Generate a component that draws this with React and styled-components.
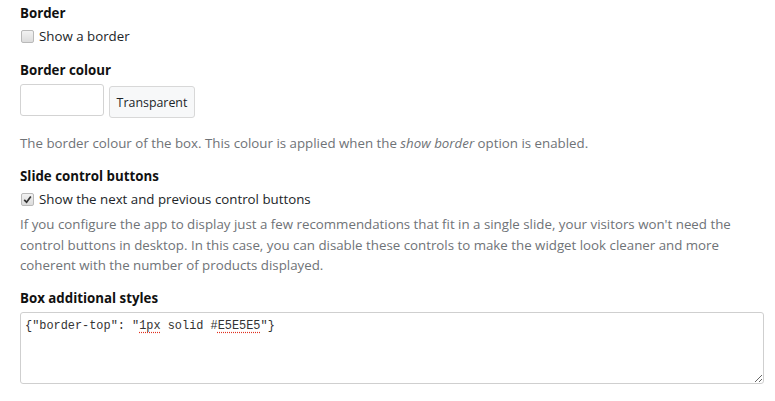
import React from "react";
import styled, { createGlobalStyle } from "styled-components";

const Global = createGlobalStyle`
  html, body { margin: 0; padding: 0; background: #fff; }
  body {
    font-family: "Open Sans", "Noto Sans", Arial, sans-serif;
    font-size: 13.3px;
    line-height: 20.4px;
    color: #212529;
  }
`;

const Page = styled.div`
  padding: 3px 12px 0 20px;
  display: flex;
  flex-direction: column;
`;

const Group = styled.section`
  display: flex;
  flex-direction: column;
  margin-bottom: ${(p) => p.$mb || 0}px;
`;

const Heading = styled.div`
  font-weight: 700;
  color: #111;
  margin-bottom: ${(p) => p.$mb || 3}px;
`;

const CheckRow = styled.label`
  display: flex;
  align-items: center;
  gap: 5px;
  color: #212529;
`;

const Box = styled.span`
  width: 11px;
  height: 11px;
  margin-left: 1px;
  border: 1px solid #b9b9b9;
  border-radius: 2px;
  background: linear-gradient(#f2f2f2, #dcdcdc);
  display: inline-flex;
  align-items: center;
  justify-content: center;
  flex-shrink: 0;
`;

const ColourRow = styled.div`
  display: flex;
  align-items: flex-start;
  gap: 5px;
`;

const Swatch = styled.div`
  width: 82px;
  height: 30px;
  border: 1px solid #d3d3d3;
  border-radius: 3px;
  background: #fff;
`;

const Button = styled.button`
  margin-top: 2px;
  height: 32px;
  width: 86px;
  border: 1px solid #d8d8d8;
  border-radius: 3px;
  background: #f7f8f9;
  font-family: inherit;
  font-size: 12.4px;
  color: #212529;
  padding: 0;
`;

const Help = styled.p`
  margin: ${(p) => p.$mt || 0}px 0 0;
  color: #6f7377;
`;

const Editor = styled.div`
  box-sizing: border-box;
  height: 72px;
  width: 744px;
  border: 1px solid #cfcfcf;
  border-radius: 3px;
  padding: 5px 4px;
  font-family: "Liberation Mono", "DejaVu Sans Mono", monospace;
  font-size: 11.9px;
  line-height: 16px;
  color: #333;
  overflow: auto;
  resize: both;
  white-space: pre;
`;

const Misspelt = styled.span`
  text-decoration: underline dotted #e0301e;
  text-underline-offset: 3px;
`;

function Check({ checked }) {
  return (
    <Box>
      {checked && (
        <svg width="9" height="9" viewBox="0 0 9 9">
          <path d="M1.2 4.8 L3.6 7.2 L7.8 1.6" fill="none" stroke="#333" strokeWidth="1.7" />
        </svg>
      )}
    </Box>
  );
}

export default function App() {
  return (
    <>
      <Global />
      <Page>
        <Group $mb={13}>
          <Heading>Border</Heading>
          <CheckRow>
            <Check />
            Show a border
          </CheckRow>
        </Group>
        <Group $mb={12}>
          <Heading $mb={4}>Border colour</Heading>
          <ColourRow>
            <Swatch />
            <Button>Transparent</Button>
          </ColourRow>
          <Help $mt={15}>
            The border colour of the box. This colour is applied when the <em>show border</em> option is enabled.
          </Help>
        </Group>
        <Group $mb={12}>
          <Heading>Slide control buttons</Heading>
          <CheckRow>
            <Check checked />
            Show the next and previous control buttons
          </CheckRow>
          <Help $mt={5}>
            If you configure the app to display just a few recommendations that fit in a single slide, your visitors won't need the control buttons in desktop. In this case, you can disable these controls to make the widget look cleaner and more coherent with the number of products displayed.
          </Help>
        </Group>
        <Group>
          <Heading $mb={4}>Box additional styles</Heading>
          <Editor>
            {'{"border-top": "'}
            <Misspelt>1px</Misspelt>
            {" solid #"}
            <Misspelt>E5E5E5</Misspelt>
            {'"}'}
          </Editor>
        </Group>
      </Page>
    </>
  );
}
